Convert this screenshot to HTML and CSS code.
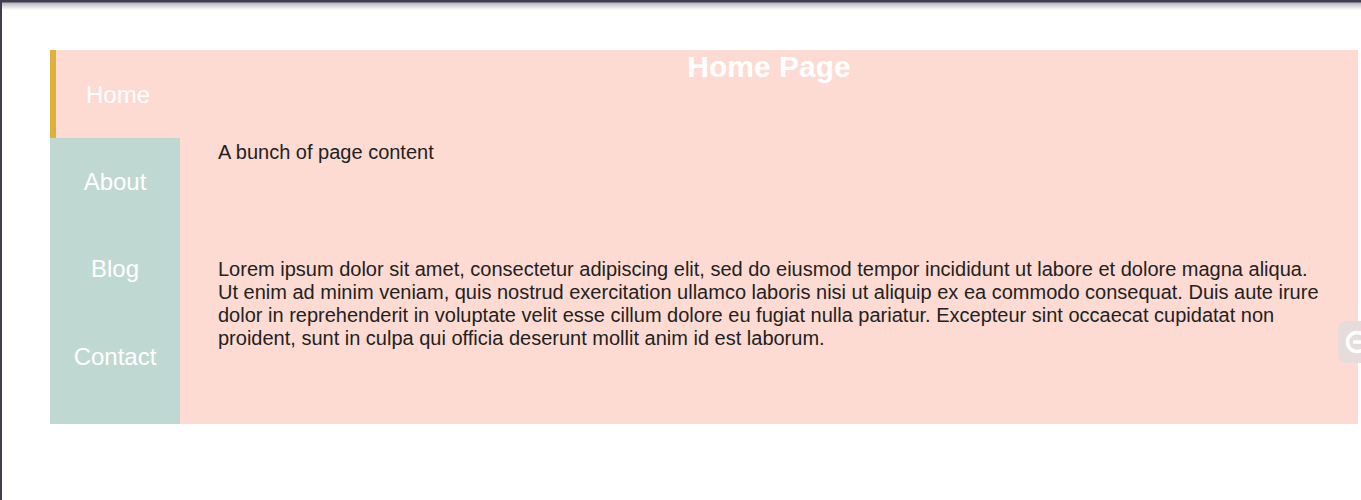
FILE: index.html
```html
<!DOCTYPE html>
<html lang="en">
<head>
<meta charset="utf-8">
<title>Home Page</title>
<link rel="stylesheet" href="styles.css">
</head>
<body>
<div class="shade"></div>
<div class="tabs">
  <nav class="sidebar">
    <div class="tab active">Home</div>
    <div class="tab">About</div>
    <div class="tab">Blog</div>
    <div class="tab">Contact</div>
  </nav>
  <main class="content">
    <h1 class="title">Home Page</h1>
    <p class="intro">A bunch of page content</p>
    <p class="lorem">Lorem ipsum dolor sit amet, consectetur adipiscing elit, sed do eiusmod tempor incididunt ut labore et dolore magna aliqua. Ut enim ad minim veniam, quis nostrud exercitation ullamco laboris nisi ut aliquip ex ea commodo consequat. Duis aute irure dolor in reprehenderit in voluptate velit esse cillum dolore eu fugiat nulla pariatur. Excepteur sint occaecat cupidatat non proident, sunt in culpa qui officia deserunt mollit anim id est laborum.</p>
  </main>
</div>
<div class="float-btn">
  <svg width="26" height="26" viewBox="0 0 26 26"><circle cx="13" cy="13" r="9.5" fill="none" stroke="#fff" stroke-width="3.5"/><path d="M9 13h9" stroke="#fff" stroke-width="3.5"/></svg>
</div>
</body>
</html>
```
FILE: styles.css
```css
html, body {
  margin: 0;
  padding: 0;
}
body {
  background: #fff;
  border-left: 2px solid #3e3e4e;
  min-height: 500px;
  box-sizing: border-box;
  font-family: "Liberation Sans", Arial, sans-serif;
}
.shade {
  height: 10px;
  background: linear-gradient(#3e3e4e 0, #3e3e4e 2px, #b9b9c0 3px, #fff 10px);
  margin-left: -2px;
}
.tabs {
  display: flex;
  margin: 40px 0 0 48px;
  width: 1308px;
  background: #fddbd2;
}
.sidebar {
  width: 130px;
  flex: none;
  background: #bfd8d2;
  display: flex;
  flex-direction: column;
}
.tab {
  padding: 30px 0;
  text-align: center;
  font-size: 24px;
  line-height: 27.6px;
  color: #fff;
}
.tab.active {
  background: #fddbd2;
  border-left: 6px solid #dfb13a;
  padding-top: 31px;
  padding-bottom: 29px;
}
.content {
  flex: 1;
  padding: 0 38px 74px;
  color: #222;
  font-size: 20px;
  line-height: 23px;
}
.title {
  margin: 0;
  text-align: center;
  color: #fff;
  font-size: 30px;
  line-height: 34.5px;
  font-weight: bold;
}
.intro {
  margin: 56px 0 0;
}
.lorem {
  margin: 94px 0 0;
}
.float-btn {
  position: absolute;
  left: 1338px;
  top: 321px;
  width: 32px;
  height: 42px;
  border-radius: 8px;
  background: #e6dcdc;
  display: flex;
  align-items: center;
  padding-left: 6px;
  box-sizing: border-box;
  overflow: hidden;
}
.float-btn svg {
  flex: none;
}
```
